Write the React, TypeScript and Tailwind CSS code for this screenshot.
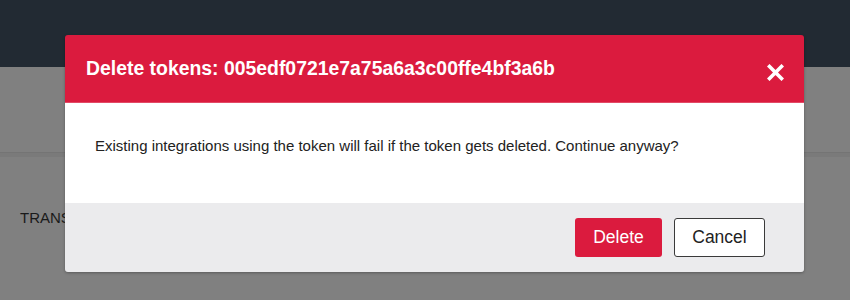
import React from "react";

export default function App() {
  return (
    <div className="relative w-[850px] h-[300px] overflow-hidden bg-[#808080] font-['Liberation_Sans',Arial,sans-serif]">
      <div className="h-[67px] bg-[#222a33]" />
      <div className="h-[86px] border-b border-[#747474]" />
      <div className="h-[4px] bg-[#7a7a7a]" />
      <div className="pl-[20px] pt-[50px] text-[15px] text-[#1a1a1a]">TRANSACTIONS</div>

      <div className="absolute left-[65px] top-[35px] w-[739px] rounded-[3px] overflow-hidden shadow-[0_1px_3px_rgba(0,0,0,0.3)]">
        <div className="h-[68px] bg-[#db1b3e] border-b border-[#e24a66] flex items-center justify-between pl-[21px] pr-[20px]">
          <h2 className="text-[19.4px] font-bold text-white leading-none pt-[1px]">
            Delete tokens: 005edf0721e7a75a6a3c00ffe4bf3a6b
          </h2>
          <svg width="17" height="17" viewBox="0 0 17 17" className="mt-[8px]">
            <path d="M2.5 2.5 L14.5 14.5 M14.5 2.5 L2.5 14.5" stroke="white" strokeWidth="3.6" strokeLinecap="square" />
          </svg>
        </div>
        <div className="h-[100px] bg-white pl-[30px] pt-[34px]">
          <p className="text-[15px] text-[#222] leading-[18px]">
            Existing integrations using the token will fail if the token gets deleted. Continue anyway?
          </p>
        </div>
        <div className="h-[69px] bg-[#ebebed] flex justify-end items-start pt-[15px] pr-[39px] gap-[12px]">
          <button className="w-[87px] h-[39px] rounded-[3px] bg-[#db1b3e] text-white text-[17.5px]">Delete</button>
          <button className="w-[91px] h-[39px] rounded-[3px] bg-white border border-[#3a3a3a] text-[#222] text-[17.5px]">Cancel</button>
        </div>
      </div>
    </div>
  );
}
